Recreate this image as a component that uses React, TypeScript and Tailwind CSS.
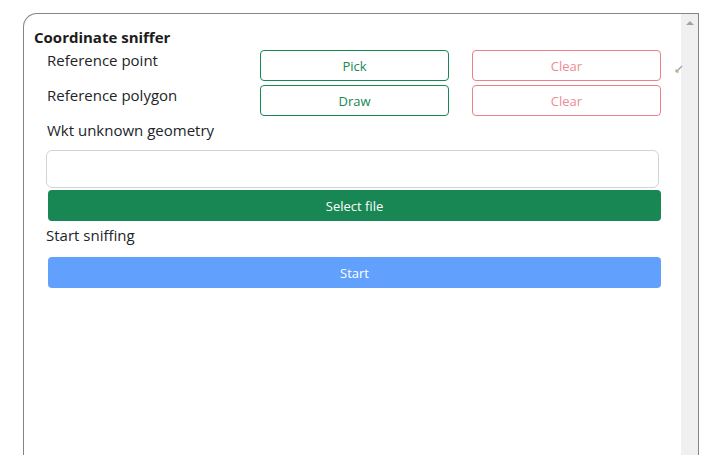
import React from "react";

export default function App() {
  const font = { fontFamily: '"Open Sans", "Noto Sans", sans-serif' };
  return (
    <div className="w-[711px] h-[455px] bg-white overflow-hidden" style={font}>
      <div className="pl-[23px] pt-[13px] w-[699px]">
        <div className="flex h-[460px] border-t border-l border-r border-[#858585] rounded-tl-[14px]">
          <div className="flex-1 relative">
            <div className="pl-[10px] pt-[11px] h-[36px] text-[15px] leading-6 font-bold text-[#1c1c1c]">
              Coordinate sniffer
            </div>
            <div className="ml-[22px] w-[615px] text-[15px] text-[#212529]">
              <div className="flex items-start h-[31px]">
                <div className="w-[214px] leading-5 pl-px">Reference point</div>
                <button className="w-[189px] h-[31px] rounded-[4px] border border-[#198754] text-[#198754] text-[13px] pt-[2px]">Pick</button>
                <button className="ml-[23px] w-[189px] h-[31px] rounded-[4px] border border-[#ee7f89] text-[#ef8a92] text-[13px] pt-[2px]">Clear</button>
              </div>
              <div className="flex items-start h-[31px] mt-[4px]">
                <div className="w-[214px] leading-5 pl-px">Reference polygon</div>
                <button className="w-[189px] h-[31px] rounded-[4px] border border-[#198754] text-[#198754] text-[13px] pt-[2px]">Draw</button>
                <button className="ml-[23px] w-[189px] h-[31px] rounded-[4px] border border-[#ee7f89] text-[#ef8a92] text-[13px] pt-[2px]">Clear</button>
              </div>
              <div className="mt-[2px] leading-6 pl-px">Wkt unknown geometry</div>
              <div className="mt-[8px] w-[613px] h-[38px] rounded-[6px] border border-[#ced4da] bg-white" />
              <button className="mt-[2px] ml-[2px] w-[613px] h-[31px] rounded-[4px] bg-[#198754] text-white text-[13px] block pt-[2px]">Select file</button>
              <div className="mt-[2px] leading-6">Start sniffing</div>
              <button className="mt-[10px] ml-[2px] w-[613px] h-[31px] rounded-[4px] bg-[#62a0fe] text-white text-[13px] block pt-[2px]">Start</button>
            </div>
            <svg className="absolute right-[-2px] top-[51px]" width="8" height="8" viewBox="0 0 8 8">
              <path d="M1 7 L7 1" stroke="#9aa7b8" strokeWidth="1.5" />
              <path d="M1 4 L1 7 L4 7" stroke="#c9a46a" strokeWidth="1" fill="none" />
            </svg>
          </div>
          <div className="w-[17px] bg-[#f0f0f0] flex justify-center pt-[7px]">
            <div className="w-0 h-0 border-l-[4px] border-r-[4px] border-b-[4px] border-l-transparent border-r-transparent border-b-[#a3a3a3]" />
          </div>
        </div>
      </div>
    </div>
  );
}
